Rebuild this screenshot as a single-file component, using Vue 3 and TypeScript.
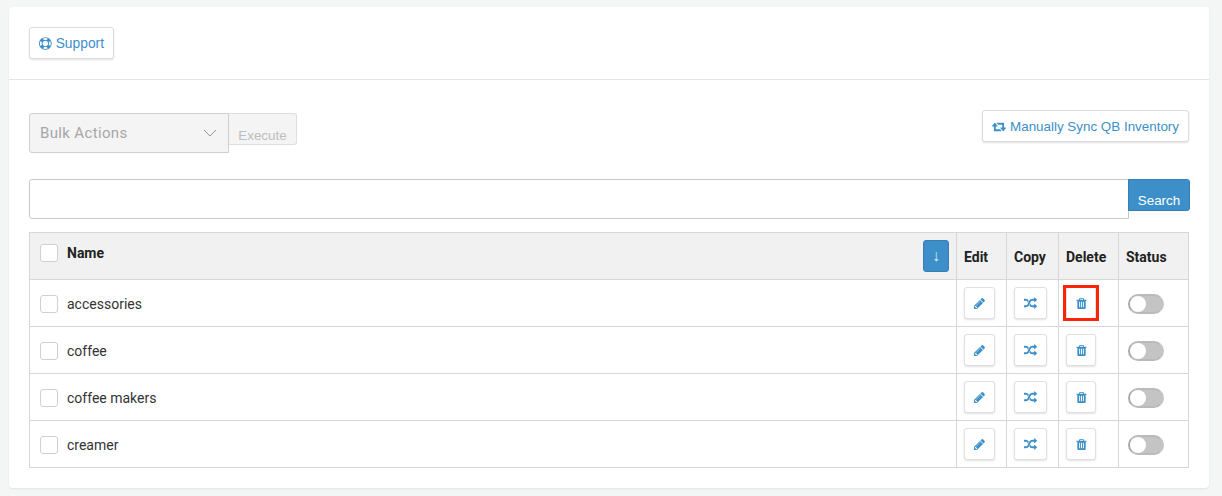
<script setup lang="ts">
const categories = ['accessories', 'coffee', 'coffee makers', 'creamer']
const isFlagged = (rowIndex: number) => rowIndex === 0
</script>

<template>
  <main class="page">
    <section class="card">
      <header class="card-top">
        <button class="btn support" type="button">
          <svg class="icon" viewBox="0 0 1792 1792"><path d="M896 0q182 0 348 71t286 191 191 286 71 348-71 348-191 286-286 191-348 71-348-71-286-191-191-286T0 896t71-348 191-286T548 71 896 0zm0 128q-190 0-361 90l194 194q82-28 167-28t167 28l194-194q-171-90-361-90zM218 1257l194-194q-28-82-28-167t28-167L218 535q-90 171-90 361t90 361zm678 407q190 0 361-90l-194-194q-82 28-167 28t-167-28l-194 194q171 90 361 90zm0-384q159 0 271.500-112.500T1280 896t-112.500-271.500T896 512 624.500 624.500 512 896t112.500 271.500T896 1280zm484-217l194 194q90-171 90-361t-90-361l-194 194q28 82 28 167t-28 167z" /></svg>
          <span class="support-text">Support</span>
        </button>
      </header>

      <div class="card-body">
        <div class="toolbar">
          <div class="bulk">
            <div class="bulk-select">
              <span>Bulk Actions</span>
              <svg class="chevron" viewBox="0 0 14 8"><path d="M1 1l6 6 6-6" /></svg>
            </div>
            <button class="execute" type="button" disabled>Execute</button>
          </div>
          <button class="btn sync" type="button">
            <svg class="icon wide" viewBox="-64 0 1920 1792"><path d="M1216 1504q0 13-9.500 22.500T1184 1536H224q-8 0-13.500-2t-9-7-5.500-8-3-11.500-1-11.500V896H0q-26 0-45-19t-19-45q0-24 15-41l320-384q19-22 49-22t49 22l320 384q15 17 15 41 0 26-19 45t-45 19H448v384h576q16 0 25 11l160 192q7 10 7 21zm640-416q0 24-15 41l-320 384q-20 23-49 23t-49-23l-320-384q-15-17-15-41 0-26 19-45t45-19h192V640H768q-16 0-25-12L583 436q-7-9-7-20 0-13 9.500-22.500T608 384h960q8 0 13.500 2t9 7 5.500 8 3 11.500 1 11.500v600h192q26 0 45 19t19 45z" /></svg>
            Manually Sync QB Inventory
          </button>
        </div>

        <form class="search" @submit.prevent>
          <input class="search-input" type="text" />
          <button class="search-btn" type="submit">Search</button>
        </form>

        <table class="grid">
          <colgroup>
            <col />
            <col class="col-edit" />
            <col class="col-copy" />
            <col class="col-delete" />
            <col class="col-status" />
          </colgroup>
          <thead>
            <tr>
              <th class="name-head">
                <div class="name-head-inner">
                  <div class="name-label">
                    <span class="check"></span>
                    <span>Name</span>
                  </div>
                  <button class="sort" type="button">↓</button>
                </div>
              </th>
              <th>Edit</th>
              <th>Copy</th>
              <th>Delete</th>
              <th>Status</th>
            </tr>
          </thead>
          <tbody>
            <tr v-for="(name, i) in categories" :key="name">
              <td>
                <div class="name-cell">
                  <span class="check"></span>
                  <span>{{ name }}</span>
                </div>
              </td>
              <td class="tool-cell">
                <button class="action" type="button">
                  <svg viewBox="0 0 1792 1792"><path d="M491 1536l91-91-235-235-91 91v107h128v128h107zm523-928q0-22-22-22-10 0-17 7l-542 542q-7 7-7 17 0 22 22 22 10 0 17-7l542-542q7-7 7-17zm-54-192l416 416-832 832H128v-416zm683 96q0 53-37 90l-166 166-416-416 166-165q36-38 90-38 53 0 91 38l235 234q37 39 37 91z" /></svg>
                </button>
              </td>
              <td class="tool-cell">
                <button class="action copy" type="button">
                  <svg viewBox="0 0 1792 1792"><path d="M666 481q-60 92-137 273-22-45-37-72.500t-40.500-63.500-51-56.500-63-35T256 512H32q-14 0-23-9t-9-23V288q0-14 9-23t23-9h224q250 0 410 225zm1126 799q0 14-9 23l-320 320q-9 9-23 9-13 0-22.500-9.500T1408 1600v-192q-32 0-85 .5t-81 1-73-1-71-5-64-10.500-63-18.500-58-28.500-59-40-55-53.500-56-69.500q59-93 136-273 22 45 37 72.500t40.500 63.500 51 56.500 63 35 81.500 14.500h256V960q0-14 9-23t23-9q12 0 24 10l319 319q9 9 9 23zm0-896q0 14-9 23l-320 320q-9 9-23 9-13 0-22.500-9.500T1408 704V512h-256q-48 0-87 15t-69 45-51 61.500-45 77.500q-32 62-78 171-29 66-49.500 111t-54 105-64 100-74 83-90 68.500-106.500 42-128 16.500H32q-14 0-23-9t-9-23v-192q0-14 9-23t23-9h224q48 0 87-15t69-45 51-61.500 45-77.500q32-62 78-171 29-66 49.500-111t54-105 64-100 74-83 90-68.500 106.500-42 128-16.500h256V64q0-14 9-23t23-9q12 0 24 10l319 319q9 9 9 23z" /></svg>
                </button>
              </td>
              <td class="tool-cell">
                <button :class="['action', 'remove', { flagged: isFlagged(i) }]" type="button">
                  <svg viewBox="0 0 1792 1792"><path d="M704 1376v-704q0-14-9-23t-23-9h-64q-14 0-23 9t-9 23v704q0 14 9 23t23 9h64q14 0 23-9t9-23zm256 0v-704q0-14-9-23t-23-9h-64q-14 0-23 9t-9 23v704q0 14 9 23t23 9h64q14 0 23-9t9-23zm256 0v-704q0-14-9-23t-23-9h-64q-14 0-23 9t-9 23v704q0 14 9 23t23 9h64q14 0 23-9t9-23zM672 384h448l-48-117q-7-9-17-11H738q-10 2-17 11zm928 32v64q0 14-9 23t-23 9h-96v948q0 83-47 143.500t-113 60.500H480q-66 0-113-58.500T320 1464V512h-96q-14 0-23-9t-9-23v-64q0-14 9-23t23-9h309l70-167q15-37 54-63t79-26h320q40 0 79 26t54 63l70 167h309q14 0 23 9t9 23z" /></svg>
                </button>
              </td>
              <td>
                <span class="toggle"><span class="knob"></span></span>
              </td>
            </tr>
          </tbody>
        </table>
      </div>
    </section>
  </main>
</template>

<style>
html,
body {
  margin: 0;
  background: #f4f6f6;
}
</style>

<style scoped>
.page {
  width: 1222px;
  height: 496px;
  box-sizing: border-box;
  padding: 7px 13px 8px 9px;
  font-family: Roboto, "Liberation Sans", sans-serif;
  overflow: hidden;
}

.card {
  height: 481px;
  box-sizing: border-box;
  background: #fff;
  border-radius: 4px;
  box-shadow: 0 1px 2px rgba(0, 0, 0, 0.08);
}

.card-top {
  height: 73px;
  box-sizing: border-box;
  padding: 20px 20px 0;
  border-bottom: 1px solid #e4e6e6;
}

.btn {
  display: inline-flex;
  align-items: center;
  gap: 4px;
  height: 32px;
  padding: 0 9px;
  background: #fff;
  border: 1px solid #dcdcdc;
  border-radius: 3px;
  box-shadow: 0 1px 2px rgba(0, 0, 0, 0.12);
  color: #3d8fc9;
  font-family: "Liberation Sans", Arial, sans-serif;
  font-size: 13.4px;
}

.btn.support {
  width: 85px;
  font-size: 13.8px;
}

.support-text {
  padding-top: 1px;
}

.icon {
  width: 13px;
  height: 13px;
  fill: #3d8fc9;
}

.icon.wide {
  width: 14px;
}

.card-body {
  padding: 30px 20px 0;
}

.toolbar {
  display: flex;
  align-items: flex-start;
  justify-content: space-between;
  height: 69px;
}

.bulk {
  display: flex;
  align-items: flex-start;
  margin-top: 3px;
}

.bulk-select {
  display: flex;
  align-items: center;
  justify-content: space-between;
  width: 200px;
  height: 40px;
  box-sizing: border-box;
  padding: 0 11px 0 10px;
  background: #f4f4f4;
  border: 1px solid #cfcfcf;
  border-radius: 3px 0 0 3px;
  color: #a6a6a6;
  font-size: 15px;
  letter-spacing: 0.35px;
}

.chevron {
  width: 14px;
  height: 8px;
  fill: none;
  stroke: #8a8a8a;
  stroke-width: 0.9;
}

.execute {
  width: 68px;
  height: 32px;
  padding: 12px 0 0;
  background: #f4f4f4;
  border: 1px solid #dedede;
  border-left: 0;
  border-radius: 0 3px 3px 0;
  color: #bdbdbd;
  font-family: "Liberation Sans", Arial, sans-serif;
  font-size: 13.4px;
}

.search {
  display: flex;
  align-items: flex-start;
  height: 53px;
}

.search-input {
  flex: none;
  width: 1100px;
  height: 40px;
  box-sizing: border-box;
  border: 1px solid #c9c9c9;
  border-radius: 3px 0 0 3px;
  outline: none;
}

.search-btn {
  flex: none;
  width: 62px;
  height: 32px;
  margin-left: -1px;
  padding: 11px 0 0;
  background: #3d8fc9;
  border: 1px solid #357fb3;
  border-radius: 0 3px 3px 0;
  color: #fff;
  font-family: "Liberation Sans", Arial, sans-serif;
  font-size: 13.4px;
}

.grid {
  width: 1160px;
  table-layout: fixed;
  border-collapse: collapse;
  color: #222;
  font-size: 14px;
}

.col-edit {
  width: 50px;
}

.col-copy {
  width: 52px;
}

.col-delete {
  width: 60px;
}

.col-status {
  width: 70px;
}

.grid th,
.grid td {
  height: 47px;
  box-sizing: border-box;
  padding: 2px 0 0 7px;
  border: 1px solid #d7d7d7;
  text-align: left;
}

.grid td.tool-cell {
  padding-top: 0;
}

.grid th {
  padding-top: 1px;
  background: #f1f1f1;
  font-weight: 700;
}

.grid th.name-head {
  padding: 0 7px 0 10px;
}

.name-head-inner {
  display: flex;
  align-items: center;
  justify-content: space-between;
}

.name-label {
  display: flex;
  align-items: center;
  gap: 9px;
  margin-bottom: 6px;
}

.name-cell {
  display: flex;
  align-items: center;
  gap: 9px;
  padding-left: 3px;
  color: #333;
}

.check {
  flex: none;
  width: 18px;
  height: 18px;
  box-sizing: border-box;
  background: #fff;
  border: 1px solid #d0d0d0;
  border-radius: 3px;
}

.sort {
  width: 26px;
  height: 32px;
  padding: 0;
  background: #3d8fc9;
  border: 1px solid #357fb3;
  border-radius: 3px;
  color: #d8e9f5;
  font-size: 16px;
}

.action {
  position: relative;
  display: flex;
  align-items: center;
  justify-content: center;
  width: 31px;
  height: 32px;
  padding: 0;
  background: #fff;
  border: 1px solid #e0e0e0;
  border-radius: 3px;
  box-shadow: 0 1px 2px rgba(0, 0, 0, 0.12);
}

.action svg {
  width: 13px;
  height: 13px;
  fill: #3d8fc9;
}

.action.copy {
  width: 33px;
}

.action.remove {
  width: 30px;
}

.action.flagged::after {
  content: "";
  position: absolute;
  top: -3px;
  right: -4px;
  bottom: -3px;
  left: -4px;
  border: 3px solid #fb2408;
}

.toggle {
  display: block;
  width: 36px;
  height: 20px;
  margin-left: 2px;
  box-sizing: border-box;
  background: #c4c4c4;
  border: 2px solid #a9a9a9;
  border-right-color: #c4c4c4;
  border-top-color: #bababa;
  border-bottom-color: #bababa;
  border-radius: 10px;
}

.knob {
  display: block;
  width: 16px;
  height: 16px;
  background: #fff;
  border-radius: 50%;
}
</style>
